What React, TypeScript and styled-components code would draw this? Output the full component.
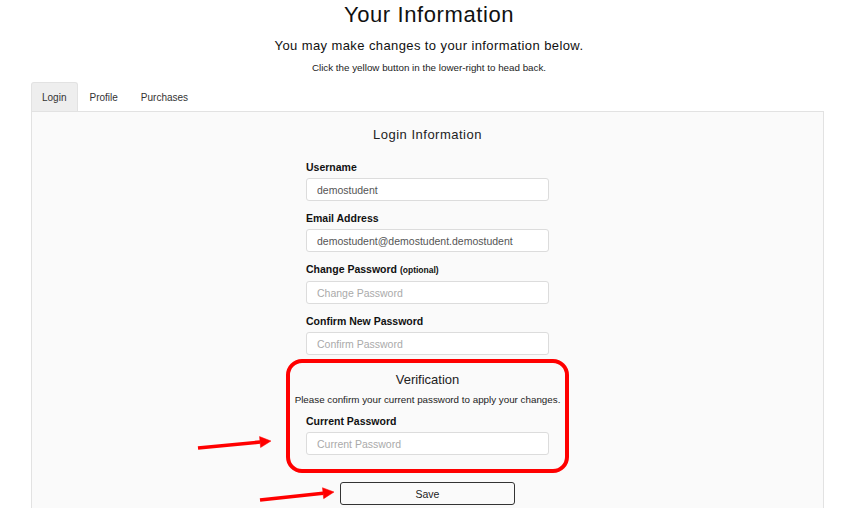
import styled, { createGlobalStyle } from 'styled-components';

const GlobalStyle = createGlobalStyle`
  body {
    margin: 0;
    background: #fff;
    font-family: 'Liberation Sans', Arial, sans-serif;
    color: #222;
  }
`;

const Page = styled.div`
  position: relative;
  width: 858px;
  height: 508px;
  overflow: hidden;
`;

const Title = styled.h1`
  margin: 0;
  padding-top: 2px;
  font-size: 22px;
  line-height: 26px;
  font-weight: 400;
  letter-spacing: 0.6px;
  text-align: center;
  color: #111;
`;

const Subtitle = styled.p`
  margin: 10px 0 0;
  font-size: 13px;
  line-height: 16px;
  letter-spacing: 0.4px;
  text-align: center;
  color: #111;
`;

const Hint = styled.p`
  margin: 8px 0 0;
  font-size: 9.8px;
  line-height: 12px;
  text-align: center;
  color: #222;
`;

const Tabs = styled.div`
  display: flex;
  margin: 8px 34px 0 31px;
  height: 29px;
`;

const Tab = styled.div<{ $active?: boolean }>`
  display: flex;
  align-items: center;
  padding: 0 11px 0 10px;
  font-size: 10px;
  color: #333;
  background: ${(p) => (p.$active ? '#eeeeee' : 'transparent')};
  border: 1px solid ${(p) => (p.$active ? '#e2e2e2' : 'transparent')};
  border-bottom: none;
  border-radius: 3px 3px 0 0;
`;

const Panel = styled.div`
  margin: 0 34px 0 31px;
  height: 420px;
  background: #fafafa;
  border: 1px solid #e2e2e2;
  display: flex;
  flex-direction: column;
  align-items: center;
`;

const PanelHeading = styled.h2`
  margin: 14px 0 0;
  font-size: 13px;
  line-height: 18px;
  font-weight: 400;
  letter-spacing: 0.5px;
  color: #222;
`;

const Form = styled.div`
  width: 243px;
  margin-top: 16px;
  display: flex;
  flex-direction: column;
`;

const Field = styled.div`
  display: flex;
  flex-direction: column;
  gap: 4px;
  margin-bottom: 10px;
`;

const Label = styled.label`
  font-size: 10.5px;
  line-height: 14px;
  font-weight: 700;
  color: #111;
`;

const Optional = styled.span`
  font-size: 8.5px;
  font-weight: 700;
`;

const Input = styled.input`
  box-sizing: border-box;
  width: 243px;
  height: 23px;
  padding: 0 10px;
  border: 1px solid #dcdcdc;
  border-radius: 3px;
  background: #fff;
  font-family: 'Liberation Sans', Arial, sans-serif;
  font-size: 10.5px;
  color: #555;
  outline: none;
  &::placeholder {
    color: #aaa;
  }
`;

const VerifyBox = styled.div`
  box-sizing: border-box;
  width: 283px;
  margin-top: -6px;
  padding: 8px 0 14px;
  border: 4px solid #f00;
  border-radius: 16px;
  display: flex;
  flex-direction: column;
  align-items: center;
`;

const VerifyTitle = styled.h3`
  margin: 0;
  font-size: 13px;
  line-height: 18px;
  font-weight: 400;
  color: #222;
`;

const VerifyText = styled.p`
  margin: 4px 0 7px;
  font-size: 9.8px;
  line-height: 14px;
  color: #222;
  white-space: nowrap;
`;

const VerifyField = styled(Field)`
  margin-bottom: 0;
`;

const SaveButton = styled.button`
  margin-top: 9px;
  width: 175px;
  height: 23px;
  border: 1px solid #333;
  border-radius: 3px;
  background: #fafafa;
  font-family: 'Liberation Sans', Arial, sans-serif;
  font-size: 10.5px;
  color: #222;
`;

const Annotations = styled.svg`
  position: absolute;
  left: 0;
  top: 0;
  pointer-events: none;
`;

const Arrow = ({ x1, y1, x2, y2 }: { x1: number; y1: number; x2: number; y2: number }) => {
  const a = Math.atan2(y2 - y1, x2 - x1);
  const head = 11;
  const half = 5.5;
  const bx = x2 - head * Math.cos(a);
  const by = y2 - head * Math.sin(a);
  const px = -Math.sin(a) * half;
  const py = Math.cos(a) * half;
  return (
    <g fill="#f00" stroke="#f00">
      <line x1={x1} y1={y1} x2={bx} y2={by} strokeWidth={3.5} />
      <polygon points={`${x2},${y2} ${bx + px},${by + py} ${bx - px},${by - py}`} strokeWidth={0.5} />
    </g>
  );
};

export default function App() {
  return (
    <Page>
      <GlobalStyle />
      <Title>Your Information</Title>
      <Subtitle>You may make changes to your information below.</Subtitle>
      <Hint>Click the yellow button in the lower-right to head back.</Hint>
      <Tabs>
        <Tab $active>Login</Tab>
        <Tab>Profile</Tab>
        <Tab>Purchases</Tab>
      </Tabs>
      <Panel>
        <PanelHeading>Login Information</PanelHeading>
        <Form>
          <Field>
            <Label>Username</Label>
            <Input defaultValue="demostudent" />
          </Field>
          <Field>
            <Label>Email Address</Label>
            <Input defaultValue="demostudent@demostudent.demostudent" />
          </Field>
          <Field>
            <Label>
              Change Password <Optional>(optional)</Optional>
            </Label>
            <Input type="password" placeholder="Change Password" />
          </Field>
          <Field>
            <Label>Confirm New Password</Label>
            <Input type="password" placeholder="Confirm Password" />
          </Field>
        </Form>
        <VerifyBox>
          <VerifyTitle>Verification</VerifyTitle>
          <VerifyText>Please confirm your current password to apply your changes.</VerifyText>
          <VerifyField>
            <Label>Current Password</Label>
            <Input type="password" placeholder="Current Password" />
          </VerifyField>
        </VerifyBox>
        <SaveButton>Save</SaveButton>
      </Panel>
      <Annotations width={858} height={508}>
        <Arrow x1={198} y1={448} x2={271} y2={441} />
        <Arrow x1={260} y1={500} x2={334} y2={492} />
      </Annotations>
    </Page>
  );
}
